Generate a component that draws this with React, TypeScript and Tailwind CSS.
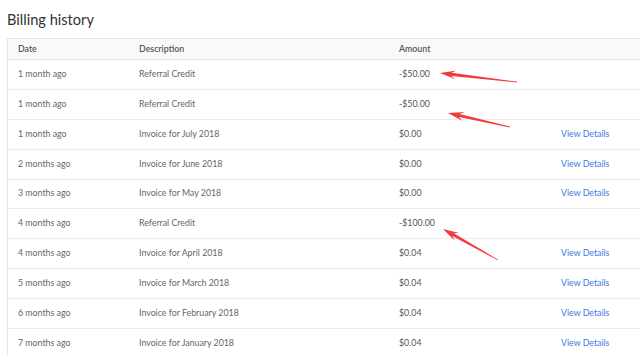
import React from 'react';

type Row = {
  date: string;
  description: string;
  amount: string;
  details?: boolean;
};

const rows: Row[] = [
  { date: '1 month ago', description: 'Referral Credit', amount: '-$50.00' },
  { date: '1 month ago', description: 'Referral Credit', amount: '-$50.00' },
  { date: '1 month ago', description: 'Invoice for July 2018', amount: '$0.00', details: true },
  { date: '2 months ago', description: 'Invoice for June 2018', amount: '$0.00', details: true },
  { date: '3 months ago', description: 'Invoice for May 2018', amount: '$0.00', details: true },
  { date: '4 months ago', description: 'Referral Credit', amount: '-$100.00' },
  { date: '4 months ago', description: 'Invoice for April 2018', amount: '$0.04', details: true },
  { date: '5 months ago', description: 'Invoice for March 2018', amount: '$0.04', details: true },
  { date: '6 months ago', description: 'Invoice for February 2018', amount: '$0.04', details: true },
  { date: '7 months ago', description: 'Invoice for January 2018', amount: '$0.04', details: true },
];

// 赤い矢印（先端 tip から尻尾 tail へ細くなる）
function arrowPoints(tip: [number, number], tail: [number, number], headLen = 16, headW = 9, shaft = 3.2) {
  const dx = tail[0] - tip[0];
  const dy = tail[1] - tip[1];
  const len = Math.hypot(dx, dy);
  const d = [dx / len, dy / len];
  const n = [-d[1], d[0]];
  const p = (base: [number, number], along: number, side: number) =>
    `${(base[0] + d[0] * along + n[0] * side).toFixed(1)},${(base[1] + d[1] * along + n[1] * side).toFixed(1)}`;
  return [
    p(tip, 0, 0),
    p(tip, headLen, headW / 2),
    p(tip, headLen * 0.72, shaft / 2),
    p(tail, 0, 0.4),
    p(tail, 0, -0.4),
    p(tip, headLen * 0.72, -shaft / 2),
    p(tip, headLen, -headW / 2),
  ].join(' ');
}

const arrows: { tip: [number, number]; tail: [number, number] }[] = [
  { tip: [440, 73], tail: [517, 82] },
  { tip: [448, 113], tail: [510, 127] },
  { tip: [443, 229], tail: [498, 260] },
];

export default function App() {
  return (
    <div
      className="relative w-[640px] h-[356px] overflow-hidden bg-white"
      style={{ fontFamily: 'Lato, "Open Sans", Arial, sans-serif' }}
    >
      <div className="pl-[7px] w-[680px]">
        <h2 className="pt-[9px] h-[38px] text-[14.6px] leading-[22px] text-[#333]">Billing history</h2>

        <div className="border-l border-t border-[#e6e6e6]">
          {/* ヘッダー行 */}
          <div className="grid grid-cols-[121px_260px_162px_1fr] h-[21px] items-center bg-[#f9f9f9] border-b border-[#e6e6e6] text-[8.8px] font-semibold text-[#555]">
            <div className="pl-[10px]">Date</div>
            <div className="pl-[10px]">Description</div>
            <div className="pl-[10px]">Amount</div>
            <div />
          </div>

          {rows.map((r, i) => (
            <div
              key={i}
              className="grid grid-cols-[121px_260px_162px_1fr] h-[29.9px] items-center border-b border-[#ececec] text-[8.8px] text-[#666]"
            >
              <div className="pl-[10px] -mt-[2px]">{r.date}</div>
              <div className="pl-[10px] -mt-[2px]">{r.description}</div>
              <div className="pl-[10px] -mt-[2px] text-[#555]">{r.amount}</div>
              <div className="pl-[10px] -mt-[2px]">
                {r.details && <span className="text-[#3d78e3]">View Details</span>}
              </div>
            </div>
          ))}
        </div>
      </div>

      <svg className="absolute inset-0 pointer-events-none" width="640" height="356">
        {arrows.map((a, i) => (
          <polygon key={i} points={arrowPoints(a.tip, a.tail)} fill="#f23b3b" />
        ))}
      </svg>
    </div>
  );
}
